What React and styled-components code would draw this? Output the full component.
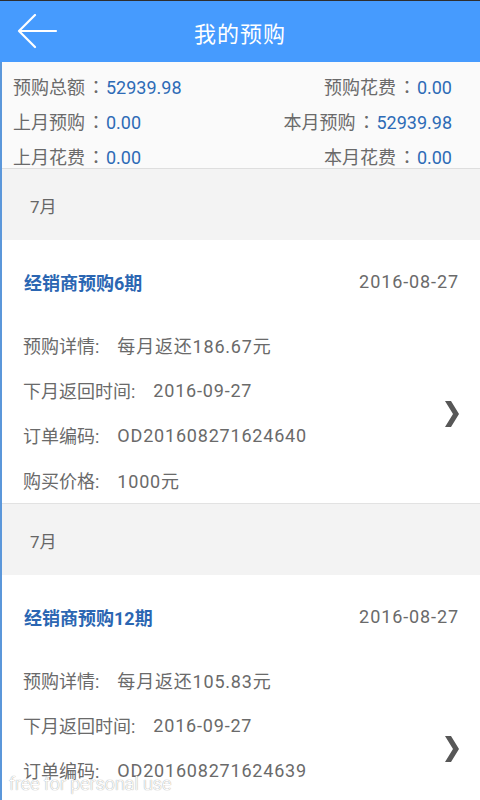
import React from "react";
import styled, { createGlobalStyle } from "styled-components";

const GlobalStyle = createGlobalStyle`
  html, body {
    margin: 0;
    padding: 0;
    overflow: hidden;
    background: #ffffff;
  }
  body {
    font-family: Roboto, "Noto Sans CJK SC", sans-serif;
    -webkit-font-smoothing: antialiased;
  }
  * { box-sizing: border-box; }
`;

const summary = [
  [
    { label: "预购总额", value: "52939.98" },
    { label: "预购花费", value: "0.00" },
  ],
  [
    { label: "上月预购", value: "0.00" },
    { label: "本月预购", value: "52939.98" },
  ],
  [
    { label: "上月花费", value: "0.00" },
    { label: "本月花费", value: "0.00" },
  ],
];

const orders = [
  {
    month: "7月",
    name: "经销商预购6期",
    date: "2016-08-27",
    details: [
      ["预购详情", "每月返还186.67元"],
      ["下月返回时间", "2016-09-27"],
      ["订单编码", "OD201608271624640"],
      ["购买价格", "1000元"],
    ],
  },
  {
    month: "7月",
    name: "经销商预购12期",
    date: "2016-08-27",
    details: [
      ["预购详情", "每月返还105.83元"],
      ["下月返回时间", "2016-09-27"],
      ["订单编码", "OD201608271624639"],
      ["购买价格", "1000元"],
    ],
  },
];

const BackArrow = () => (
  <svg width="42" height="36" viewBox="0 0 42 36" fill="none">
    <path
      d="M40 17H3M3 17L19 1M3 17L19 33"
      stroke="#ffffff"
      strokeWidth="2.2"
      strokeLinecap="round"
      strokeLinejoin="round"
    />
  </svg>
);

const Chevron = () => (
  <svg width="14" height="26" viewBox="0 0 14 26">
    <polygon points="0,0 6,0 14,13 6,26 0,26 8,13" fill="#575757" />
  </svg>
);

const App = () => {
  return (
    <Page>
      <GlobalStyle />
      <Header>
        <BackButton>
          <BackArrow />
        </BackButton>
        <Title>我的预购</Title>
      </Header>

      <Content>
        <Summary>
          {summary.map((row, i) => (
            <SummaryRow key={i}>
              {row.map((item) => (
                <SummaryItem key={item.label}>
                  {item.label}
                  <Colon>：</Colon>
                  <SummaryValue>{item.value}</SummaryValue>
                </SummaryItem>
              ))}
            </SummaryRow>
          ))}
        </Summary>

        {orders.map((order, i) => (
          <Group key={i}>
            <MonthBar>{order.month}</MonthBar>
            <Card>
              <CardHead>
                <OrderName>{order.name}</OrderName>
                <OrderDate>{order.date}</OrderDate>
              </CardHead>
              <CardBody>
                <Details>
                  {order.details.map(([label, value]) => (
                    <DetailRow key={label}>
                      <DetailLabel>{label}:</DetailLabel>
                      <DetailValue>{value}</DetailValue>
                    </DetailRow>
                  ))}
                </Details>
                <ChevronBox>
                  <Chevron />
                </ChevronBox>
              </CardBody>
            </Card>
          </Group>
        ))}
      </Content>

      <Watermark>free for personal use</Watermark>
    </Page>
  );
};

const Page = styled.div`
  width: 480px;
  height: 800px;
  overflow: hidden;
  position: relative;
  background: #ffffff;
`;

const Header = styled.header`
  position: relative;
  display: flex;
  align-items: center;
  justify-content: center;
  height: 62px;
  background: #469bfe;
  border-top: 1px solid #2e2e2e;
`;

const BackButton = styled.div`
  position: absolute;
  left: 16px;
  top: 13px;
  display: flex;
`;

const Title = styled.h1`
  margin: 0;
  font-size: 22px;
  font-weight: 400;
  color: #ffffff;
  letter-spacing: 1px;
`;

const Content = styled.div`
  border-left: 2px solid #5b97da;
`;

const Summary = styled.section`
  display: flex;
  flex-direction: column;
  gap: 11px;
  padding: 14px 28px 0 11px;
  height: 107px;
  background: #fafafa;
  border-bottom: 1px solid #dedede;
`;

const SummaryRow = styled.div`
  display: flex;
  justify-content: space-between;
  flex-shrink: 0;
  height: 24px;
  line-height: 24px;
`;

const SummaryItem = styled.div`
  font-size: 18px;
  color: #6a6a6a;
`;

const Colon = styled.span`
  display: inline-block;
  line-height: 1;
  padding: 0 1px 0 2px;
  font-family: "Noto Sans CJK TC", sans-serif;
`;

const SummaryValue = styled.span`
  color: #2d6bb6;
`;

const Group = styled.section`
  display: flex;
  flex-direction: column;
`;

const MonthBar = styled.div`
  display: flex;
  align-items: center;
  height: 71px;
  padding: 1px 0 0 28px;
  background: #f3f3f3;
  font-size: 17px;
  color: #666666;
`;

const Card = styled.div`
  background: #ffffff;
  border-bottom: 1px solid #e2e2e2;
`;

const CardHead = styled.div`
  display: flex;
  align-items: center;
  justify-content: space-between;
  height: 83px;
  padding: 0 21px 0 22px;
`;

const OrderName = styled.div`
  font-size: 18px;
  font-weight: 700;
  color: #2b66b2;
`;

const OrderDate = styled.div`
  font-size: 18px;
  color: #6a6a6a;
  letter-spacing: 0.9px;
`;

const CardBody = styled.div`
  display: flex;
  align-items: center;
  justify-content: space-between;
  padding: 0 21px 0 21px;
`;

const Details = styled.div`
  display: flex;
  flex-direction: column;
`;

const DetailRow = styled.div`
  display: flex;
  align-items: center;
  height: 45px;
  padding-bottom: 1px;
  font-size: 18px;
  color: #6a6a6a;
`;

const DetailLabel = styled.span`
  margin-right: 18px;
`;

const DetailValue = styled.span`
  letter-spacing: 0.8px;
`;

const ChevronBox = styled.div`
  display: flex;
  padding-top: 2px;
`;

const Watermark = styled.div`
  position: absolute;
  left: 9px;
  top: 773px;
  font-family: Roboto, sans-serif;
  font-size: 18px;
  font-weight: 300;
  color: #ffffff;
  text-shadow: 0 0 1px #a0a0a0, 0 0 1px #c0c0c0;
  pointer-events: none;
`;

export default App;
